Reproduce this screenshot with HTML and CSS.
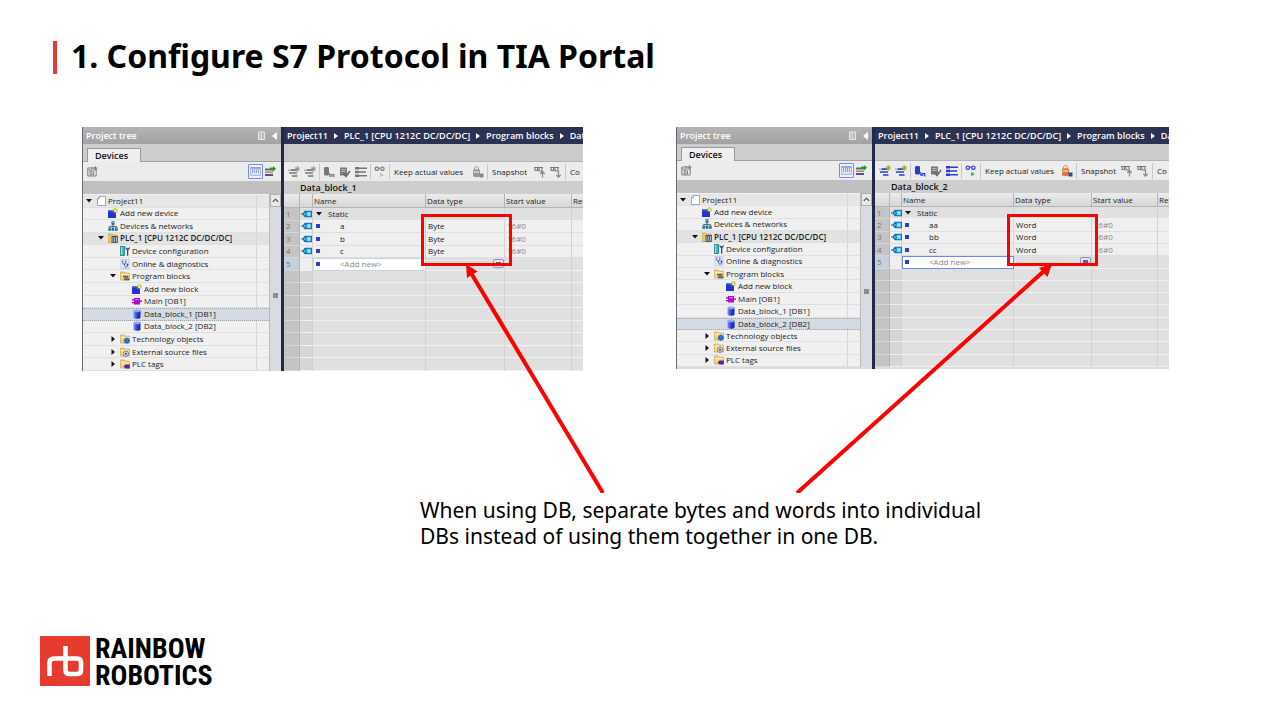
FILE: index.html
```html
<!DOCTYPE html>
<html lang="en">
<head>
<meta charset="utf-8">
<title>Configure S7 Protocol in TIA Portal</title>
<link rel="stylesheet" href="styles.css">
</head>
<body>
<svg class="defs" aria-hidden="true">
  <linearGradient id="g-cyl"><stop offset="0" stop-color="#7f95ff"/><stop offset=".5" stop-color="#2b3fe0"/><stop offset="1" stop-color="#1420a0"/></linearGradient>
  <symbol id="i-open" viewBox="0 0 6 6"><path d="M0 1h6L3 4.500z"/></symbol>
  <symbol id="i-closed" viewBox="0 0 6 6"><path d="M1.500 0v6L5 3z"/></symbol>
  <symbol id="i-page" viewBox="0 0 10 10"><path d="M3.500.5h6v9h-8v-7z" fill="#fff" stroke="#7d8fd0" stroke-width=".8"/><path d="M1.500 2.700h2.200V.6" fill="#cdd6f6" stroke="#7d8fd0" stroke-width=".6"/></symbol>
  <symbol id="i-new" viewBox="0 0 10 10"><path d="M0 2h8v8H0z" fill="#2334d0"/><path d="M0 2h8v1.500H0z" fill="#5a6cf0"/><path d="M7.200 0v5.400M4.500 2.700h5.400M5.400.8l3.700 3.800M9.100.8L5.400 4.600" stroke="#a9b900" stroke-width="1"/><circle cx="7.200" cy="2.700" r="1.200" fill="#fffb7a"/></symbol>
  <symbol id="i-net" viewBox="0 0 10 10"><path d="M5 2.500V6M1.700 7.500V5.400h6.600v2.100" fill="none" stroke="#345" stroke-width=".8"/><path d="M3.500.3h3v3.400h-3zM.3 6.400h2.800v3.300H.3zM3.700 6.400h2.600v3.300H3.700zM7 6.400h2.700v3.300H7z" fill="#1c6c9c"/><path d="M4.200 1h1.600v1H4.200zM.9 7h1.500v.8H.9zM7.600 7h1.500v.8H7.600z" fill="#7fd0e8"/></symbol>
  <symbol id="i-plc" viewBox="0 0 10 10"><path d="M0 1h4l1 1h4v7.500H0z" fill="#f2c75a" stroke="#a8873a" stroke-width=".5"/><path d="M3.600 3h6.200v6.800H3.600z" fill="#3c4658"/><path d="M4.400 4h1v5h-1zM6.200 4h1v5h-1zM8 4h1v5H8z" fill="#a9c2d4"/></symbol>
  <symbol id="i-dev" viewBox="0 0 10 10"><path d="M.4.4h4.200v9.200H.4z" fill="#34b6d8" stroke="#165" stroke-width=".7"/><path d="M1.600 1v8" stroke="#b7f0ff" stroke-width=".8"/><path d="M5.700.6v2.500l1.300 1v5.600h1.300V4.100l1.300-1V.6L8.500 2.300H6.800z" fill="#244a9c"/></symbol>
  <symbol id="i-diag" viewBox="0 0 10 10"><path d="M1 .4h8v9.200H1z" fill="#e6ebff" stroke="#9fabdf" stroke-width=".6"/><path d="M3 1.500c-1 3 .2 3.500 1.300 3.500S6.500 4 5.700 1.500M4.300 5c0 4 3.200 4 3.200 1.200" fill="none" stroke="#3447a0" stroke-width="1"/><circle cx="7.500" cy="5.600" r="1" fill="#3447a0"/></symbol>
  <symbol id="i-folder" viewBox="0 0 10 10"><path d="M.4 1h3.800l1 1.200h4.200V9H.4z" fill="#f6d77c" stroke="#b8953f" stroke-width=".6"/><path d="M.8 3.600h8.400" stroke="#fff0b8" stroke-width=".9"/></symbol>
  <symbol id="i-fblocks" viewBox="0 0 10 10"><use href="#i-folder"/><path d="M3.500 5.200h4.500v1H3.500zM4.500 7.800h4.500v1H4.500z" fill="#b9bcc2" stroke="#3a3d44" stroke-width=".8"/></symbol>
  <symbol id="i-ftech" viewBox="0 0 10 10"><use href="#i-folder"/><circle cx="6.800" cy="6.700" r="1.900" fill="#fff" stroke="#1f64c8" stroke-width="1.500"/><path d="M6.800 3.300v7M3.400 6.700h6.600M4.500 4.300l4.800 4.900M9.200 4.300L4.400 9.200" stroke="#1f64c8" stroke-width=".8"/></symbol>
  <symbol id="i-fext" viewBox="0 0 10 10"><use href="#i-folder"/><circle cx="6" cy="6.700" r="2.700" fill="#d5d5dc" stroke="#666c7c" stroke-width=".8"/><circle cx="6" cy="6.700" r="1" fill="#445"/></symbol>
  <symbol id="i-ftags" viewBox="0 0 10 10"><use href="#i-folder"/><path d="M3.500 7.600l2-2h4.300v4H5.500z" fill="#5d1fa8"/></symbol>
  <symbol id="i-ob" viewBox="0 0 10 10"><path d="M2 2h6v6.500H2z" fill="#b400d8"/><path d="M0 3.800h2M0 6.600h2M8 5.200h2" stroke="#8300a0" stroke-width="1.300"/><path d="M3 3h4v1.200H3z" fill="#e46cff"/></symbol>
  <symbol id="i-db" viewBox="0 0 10 10"><path d="M1.500 1.800v6.600c0 1.800 7 1.800 7 0V1.800z" fill="url(#g-cyl)"/><ellipse cx="5" cy="1.900" rx="3.500" ry="1.300" fill="#8ea2ff"/></symbol>
  <symbol id="i-tag" viewBox="0 0 11 8"><path d="M0 3.400h1.500L3.800.8H11v6.400H3.800L1.500 4.600H0z" fill="#0c74ba"/><path d="M5.500 1.800H10v4.400H5.500z" fill="#45c0f0"/><path d="M6.500 3.200h2.700M6.500 4.900h2.700" stroke="#fff" stroke-width=".8"/><circle cx="3.800" cy="4" r=".8" fill="#bfe8fb"/></symbol>
  <symbol id="i-newview" viewBox="0 0 11 11"><path d="M.8 2h8.400v8H.8zM.8 4h8.400M3 5.500h2v3.500H3zM6.500 5.500v4M5 1v2" fill="none" stroke="#777" stroke-width=".9"/><path d="M8.500 0v4M6.500 2h4" stroke="#777" stroke-width=".8"/></symbol>
  <symbol id="i-cols" viewBox="0 0 11 11"><path d="M.5 1.500h10v8H.5z" fill="#dfe3f4" stroke="#a3abd0" stroke-width=".8"/><path d="M.5 2h10" stroke="#8791bd" stroke-width="1.200"/><path d="M2.500 3v4M4.500 3v4M6.500 3v4M8.500 3v4" stroke="#8791bd" stroke-width=".8"/></symbol>
  <symbol id="i-export" viewBox="0 0 11 11"><path d="M0 2.500h8v2H0z" fill="#3b7898"/><path d="M0 5.500h8v1.500H0z" fill="#d97a2b"/><path d="M0 8h8v2H0z" fill="#4a4f9e"/><path d="M5 1.500h3V0l3 2.800-3 2.700V4H5z" fill="#199a35"/></symbol>
  <symbol id="i-row" viewBox="0 0 12 12"><path d="M2.500 4.200h6M1 7h8M4 10h5.500" stroke="currentColor" stroke-width="1.700"/><path d="M0 4.200h2M9.300 0v6M6.500 3h5.500M7.400 1.100l3.800 3.800M11.200 1.100L7.400 4.900" stroke="var(--spark)" stroke-width=".9"/></symbol>
  <symbol id="i-dbs" viewBox="0 0 12 12"><path d="M1 2c0-1.300 5-1.300 5 0v6.500c0 1.300-5 1.300-5 0z" fill="currentColor"/><path d="M6.800 7v3.200h2V8.500h2v3" fill="none" stroke="currentColor" stroke-width="1.200"/></symbol>
  <symbol id="i-dbcheck" viewBox="0 0 12 12"><path d="M1 1.500h7v8H1z" fill="#777"/><path d="M2.200 3.500h4.500M2.200 5.500h4.500" stroke="#ccc" stroke-width=".8"/><path d="M5 8l2 2.500L11 5" fill="none" stroke="#666" stroke-width="1.600"/></symbol>
  <symbol id="i-list" viewBox="0 0 12 12"><path d="M0 2.300h4M0 6h4M0 9.700h4" stroke="currentColor" stroke-width="2.400"/><path d="M4 2.300h8M4 6h7M4 9.700h8" stroke="currentColor" stroke-width="1.400" fill="none"/></symbol>
  <symbol id="i-glasses" viewBox="0 0 12 12"><path d="M4.300 2.200h2.400" stroke="currentColor"/><circle cx="2.800" cy="2.700" r="1.700" fill="none" stroke="currentColor" stroke-width="1.200"/><circle cx="8.400" cy="2.700" r="1.700" fill="none" stroke="currentColor" stroke-width="1.200"/><path d="M6 7l4 2-4 2z" fill="var(--go)"/></symbol>
  <symbol id="i-lock" viewBox="0 0 12 12"><path d="M2.500 4V2.200c0-2 4-2 4 0V4" fill="none" stroke="var(--cyl)" stroke-width="1"/><path d="M1 4c0-1 7-1 7 0v6c0 1.500-7 1.500-7 0z" fill="var(--cyl)"/><path d="M1.500 6h5.500" stroke="#eee"/><path d="M7.500 7.500h4v4h-4z" fill="var(--pad)"/></symbol>
  <symbol id="i-snapup" viewBox="0 0 12 12"><path d="M0 1.500h9M1 1v4M1 4.500h2.500V2M5 2v3h3V2" fill="none" stroke="#777" stroke-width="1.100"/><path d="M8.500 11.500V6M6.300 8l2.200-2.500L10.700 8" fill="none" stroke="#888" stroke-width="1.200"/></symbol>
  <symbol id="i-snapdn" viewBox="0 0 12 12"><path d="M0 1.500h9M1 1v4M1 4.500h2.500V2M5 2v3h3V2" fill="none" stroke="#777" stroke-width="1.100"/><path d="M8.500 5v6M6.300 8.800l2.200 2.400 2.200-2.400" fill="none" stroke="#888" stroke-width="1.200"/></symbol>
</svg>

<main class="slide">
  <h1 class="title">1. Configure S7 Protocol in TIA Portal</h1>

  <section class="stage">
    <figure class="shot shot-a">
      <div class="tree-pane">
        <div class="pane-head">Project tree<svg class="head-icons" viewBox="0 0 20 10"><path d="M.5 1h6v7.500h-6zM3 1v7.500" fill="#bbb" stroke="#e6e6e6"/><path d="M19 1v8l-5-4z" fill="#fff"/></svg></div>
        <div class="tabs"><button class="tab">Devices</button></div>
        <div class="tools tree-tools"><button class="tool"><svg><use href="#i-newview"/></svg></button><button class="tool picked"><svg><use href="#i-cols"/></svg></button><button class="tool"><svg><use href="#i-export"/></svg></button></div>
        <div class="band"></div>
        <div class="tree-body">
          <ul class="tree">
            <li class="d0 lit"><svg class="tw"><use href="#i-open"/></svg><svg class="ic"><use href="#i-page"/></svg>Project11</li>
            <li class="d1"><svg class="tw"></svg><svg class="ic"><use href="#i-new"/></svg>Add new device</li>
            <li class="d1"><svg class="tw"></svg><svg class="ic"><use href="#i-net"/></svg>Devices &amp; networks</li>
            <li class="d1 strong"><svg class="tw"><use href="#i-open"/></svg><svg class="ic"><use href="#i-plc"/></svg>PLC_1 [CPU 1212C DC/DC/DC]</li>
            <li class="d2"><svg class="tw"></svg><svg class="ic"><use href="#i-dev"/></svg>Device configuration</li>
            <li class="d2"><svg class="tw"></svg><svg class="ic"><use href="#i-diag"/></svg>Online &amp; diagnostics</li>
            <li class="d2"><svg class="tw"><use href="#i-open"/></svg><svg class="ic"><use href="#i-fblocks"/></svg>Program blocks</li>
            <li class="d3"><svg class="tw"></svg><svg class="ic"><use href="#i-new"/></svg>Add new block</li>
            <li class="d3"><svg class="tw"></svg><svg class="ic"><use href="#i-ob"/></svg>Main [OB1]</li>
            <li class="d3 chosen"><svg class="tw"></svg><svg class="ic"><use href="#i-db"/></svg>Data_block_1 [DB1]</li>
            <li class="d3"><svg class="tw"></svg><svg class="ic"><use href="#i-db"/></svg>Data_block_2 [DB2]</li>
            <li class="d2"><svg class="tw"><use href="#i-closed"/></svg><svg class="ic"><use href="#i-ftech"/></svg>Technology objects</li>
            <li class="d2"><svg class="tw"><use href="#i-closed"/></svg><svg class="ic"><use href="#i-fext"/></svg>External source files</li>
            <li class="d2"><svg class="tw"><use href="#i-closed"/></svg><svg class="ic"><use href="#i-ftags"/></svg>PLC tags</li>
          </ul>
          <div class="scroll"><svg class="up" viewBox="0 0 10 10"><path d="M2 6.500L5 3.500l3 3" fill="none" stroke="#444" stroke-width="1.200"/></svg><span class="grip"></span></div>
        </div>
      </div>
      <div class="editor">
        <nav class="crumbs"><span>Project11</span><span>PLC_1 [CPU 1212C DC/DC/DC]</span><span>Program blocks</span><span>Data</span></nav>
        <div class="strip"></div>
        <div class="tools edit-tools idle">
          <button class="tool"><svg><use href="#i-row"/></svg></button><button class="tool"><svg><use href="#i-row"/></svg></button><i class="sep"></i>
          <button class="tool"><svg><use href="#i-dbs"/></svg></button><button class="tool"><svg><use href="#i-dbcheck"/></svg></button><button class="tool"><svg><use href="#i-list"/></svg></button><i class="sep"></i>
          <button class="tool"><svg><use href="#i-glasses"/></svg></button><i class="sep"></i>
          <button class="word keep">Keep actual values</button><button class="tool"><svg><use href="#i-lock"/></svg></button><i class="sep"></i>
          <button class="word snap">Snapshot</button><button class="tool"><svg><use href="#i-snapup"/></svg></button><button class="tool"><svg><use href="#i-snapdn"/></svg></button><i class="sep"></i>
          <button class="word">Co</button>
        </div>
        <h2 class="block-name">Data_block_1</h2>
        <table class="grid">
          <thead><tr><th></th><th></th><th>Name</th><th>Data type</th><th>Start value</th><th>Ret</th></tr></thead>
          <tbody>
            <tr class="static"><td>1</td><td><svg class="tag"><use href="#i-tag"/></svg></td><td><svg class="tw"><use href="#i-open"/></svg>Static</td><td></td><td></td><td></td></tr>
            <tr class="item"><td>2</td><td><svg class="tag"><use href="#i-tag"/></svg></td><td><i class="dot"></i>a</td><td>Byte</td><td>16#0</td><td></td></tr>
            <tr class="item"><td>3</td><td><svg class="tag"><use href="#i-tag"/></svg></td><td><i class="dot"></i>b</td><td>Byte</td><td>16#0</td><td></td></tr>
            <tr class="item"><td>4</td><td><svg class="tag"><use href="#i-tag"/></svg></td><td><i class="dot"></i>c</td><td>Byte</td><td>16#0</td><td></td></tr>
            <tr class="add"><td>5</td><td></td><td><i class="dot"></i>&lt;Add new&gt;</td><td><button class="pick" aria-label="Choose type"></button></td><td></td><td></td></tr>
            <tr><td></td><td></td><td></td><td></td><td></td><td></td></tr>
            <tr><td></td><td></td><td></td><td></td><td></td><td></td></tr>
            <tr><td></td><td></td><td></td><td></td><td></td><td></td></tr>
            <tr><td></td><td></td><td></td><td></td><td></td><td></td></tr>
            <tr><td></td><td></td><td></td><td></td><td></td><td></td></tr>
            <tr><td></td><td></td><td></td><td></td><td></td><td></td></tr>
            <tr><td></td><td></td><td></td><td></td><td></td><td></td></tr>
            <tr><td></td><td></td><td></td><td></td><td></td><td></td></tr>
          </tbody>
        </table>
      </div>
      <span class="mark"></span>
    </figure>

    <figure class="shot shot-b">
      <div class="tree-pane">
        <div class="pane-head">Project tree<svg class="head-icons" viewBox="0 0 20 10"><path d="M.5 1h6v7.500h-6zM3 1v7.500" fill="#bbb" stroke="#e6e6e6"/><path d="M19 1v8l-5-4z" fill="#fff"/></svg></div>
        <div class="tabs"><button class="tab">Devices</button></div>
        <div class="tools tree-tools"><button class="tool"><svg><use href="#i-newview"/></svg></button><button class="tool picked"><svg><use href="#i-cols"/></svg></button><button class="tool"><svg><use href="#i-export"/></svg></button></div>
        <div class="band"></div>
        <div class="tree-body">
          <ul class="tree">
            <li class="d0 lit"><svg class="tw"><use href="#i-open"/></svg><svg class="ic"><use href="#i-page"/></svg>Project11</li>
            <li class="d1"><svg class="tw"></svg><svg class="ic"><use href="#i-new"/></svg>Add new device</li>
            <li class="d1"><svg class="tw"></svg><svg class="ic"><use href="#i-net"/></svg>Devices &amp; networks</li>
            <li class="d1 strong"><svg class="tw"><use href="#i-open"/></svg><svg class="ic"><use href="#i-plc"/></svg>PLC_1 [CPU 1212C DC/DC/DC]</li>
            <li class="d2"><svg class="tw"></svg><svg class="ic"><use href="#i-dev"/></svg>Device configuration</li>
            <li class="d2"><svg class="tw"></svg><svg class="ic"><use href="#i-diag"/></svg>Online &amp; diagnostics</li>
            <li class="d2"><svg class="tw"><use href="#i-open"/></svg><svg class="ic"><use href="#i-fblocks"/></svg>Program blocks</li>
            <li class="d3"><svg class="tw"></svg><svg class="ic"><use href="#i-new"/></svg>Add new block</li>
            <li class="d3"><svg class="tw"></svg><svg class="ic"><use href="#i-ob"/></svg>Main [OB1]</li>
            <li class="d3"><svg class="tw"></svg><svg class="ic"><use href="#i-db"/></svg>Data_block_1 [DB1]</li>
            <li class="d3 chosen"><svg class="tw"></svg><svg class="ic"><use href="#i-db"/></svg>Data_block_2 [DB2]</li>
            <li class="d2"><svg class="tw"><use href="#i-closed"/></svg><svg class="ic"><use href="#i-ftech"/></svg>Technology objects</li>
            <li class="d2"><svg class="tw"><use href="#i-closed"/></svg><svg class="ic"><use href="#i-fext"/></svg>External source files</li>
            <li class="d2"><svg class="tw"><use href="#i-closed"/></svg><svg class="ic"><use href="#i-ftags"/></svg>PLC tags</li>
          </ul>
          <div class="scroll"><svg class="up" viewBox="0 0 10 10"><path d="M2 6.500L5 3.500l3 3" fill="none" stroke="#444" stroke-width="1.200"/></svg><span class="grip"></span></div>
        </div>
      </div>
      <div class="editor">
        <nav class="crumbs"><span>Project11</span><span>PLC_1 [CPU 1212C DC/DC/DC]</span><span>Program blocks</span><span>Data</span></nav>
        <div class="strip"></div>
        <div class="tools edit-tools live">
          <button class="tool"><svg><use href="#i-row"/></svg></button><button class="tool"><svg><use href="#i-row"/></svg></button><i class="sep"></i>
          <button class="tool"><svg><use href="#i-dbs"/></svg></button><button class="tool"><svg><use href="#i-dbcheck"/></svg></button><button class="tool"><svg><use href="#i-list"/></svg></button><i class="sep"></i>
          <button class="tool"><svg><use href="#i-glasses"/></svg></button><i class="sep"></i>
          <button class="word keep">Keep actual values</button><button class="tool"><svg><use href="#i-lock"/></svg></button><i class="sep"></i>
          <button class="word snap">Snapshot</button><button class="tool"><svg><use href="#i-snapup"/></svg></button><button class="tool"><svg><use href="#i-snapdn"/></svg></button><i class="sep"></i>
          <button class="word">Co</button>
        </div>
        <h2 class="block-name">Data_block_2</h2>
        <table class="grid">
          <thead><tr><th></th><th></th><th>Name</th><th>Data type</th><th>Start value</th><th>Ret</th></tr></thead>
          <tbody>
            <tr class="static"><td>1</td><td><svg class="tag"><use href="#i-tag"/></svg></td><td><svg class="tw"><use href="#i-open"/></svg>Static</td><td></td><td></td><td></td></tr>
            <tr class="item"><td>2</td><td><svg class="tag"><use href="#i-tag"/></svg></td><td><i class="dot"></i>aa</td><td>Word</td><td>16#0</td><td></td></tr>
            <tr class="item"><td>3</td><td><svg class="tag"><use href="#i-tag"/></svg></td><td><i class="dot"></i>bb</td><td>Word</td><td>16#0</td><td></td></tr>
            <tr class="item"><td>4</td><td><svg class="tag"><use href="#i-tag"/></svg></td><td><i class="dot"></i>cc</td><td>Word</td><td>16#0</td><td></td></tr>
            <tr class="add focus"><td>5</td><td></td><td><i class="dot"></i>&lt;Add new&gt;</td><td><button class="pick" aria-label="Choose type"></button></td><td></td><td></td></tr>
            <tr><td></td><td></td><td></td><td></td><td></td><td></td></tr>
            <tr><td></td><td></td><td></td><td></td><td></td><td></td></tr>
            <tr><td></td><td></td><td></td><td></td><td></td><td></td></tr>
            <tr><td></td><td></td><td></td><td></td><td></td><td></td></tr>
            <tr><td></td><td></td><td></td><td></td><td></td><td></td></tr>
            <tr><td></td><td></td><td></td><td></td><td></td><td></td></tr>
            <tr><td></td><td></td><td></td><td></td><td></td><td></td></tr>
            <tr><td></td><td></td><td></td><td></td><td></td><td></td></tr>
          </tbody>
        </table>
      </div>
      <span class="mark"></span>
    </figure>

    <svg class="arrows" viewBox="0 0 1280 366" preserveAspectRatio="none" aria-hidden="true">
      <path d="M603 366L471 146M797 366L1044 144" stroke="#f00" stroke-width="4"/>
      <path d="M466 137l11.500 7.500-10.500 6.500zM1052 137l-4.500 13-8.500-9z" fill="#f00"/>
    </svg>
  </section>

  <p class="note">When using DB, separate bytes and words into individual DBs instead of using them together in one DB.</p>

  <footer class="brand">
    <svg class="logo" viewBox="0 0 50 50" aria-hidden="true"><path d="M0 0h50v50H0z" fill="#e63c30"/><path d="M9.500 40V27q0-4.500 4.500-4.500h23q4 0 4 4V34q0 4-4 4h-7.500q-4 0-4-4V10" fill="none" stroke="#fff" stroke-width="4.600"/></svg>
    <div class="brand-name">RAINBOW<br>ROBOTICS</div>
  </footer>
</main>
</body>
</html>
```
FILE: styles.css
```css
* { box-sizing: border-box; }
body { margin: 0; background: #fff; color: #000; font-family: "Noto Sans", "Open Sans", sans-serif; }
button { font: inherit; color: inherit; border: 0; padding: 0; background: none; white-space: nowrap; }
.defs { position: absolute; width: 0; height: 0; }

.slide { display: flex; flex-direction: column; min-height: 100vh; padding-bottom: 31px; overflow: hidden; }
.title { margin: 41px 0 0 53px; padding-left: 14px; border-left: 4px solid #e63c30; font-size: 32px; line-height: 29px; padding-bottom: 4px; font-weight: 700; white-space: nowrap; }

.stage { position: relative; display: grid; grid-template-columns: 501fr 493fr; gap: 93px; align-items: start; margin-top: 53px; padding: 0 111px 0 82px; }
.arrows { position: absolute; left: 0; top: 0; width: 100%; height: 366px; pointer-events: none; }
.note { width: 600px; margin: 126px 0 0 420px; font-size: 21px; line-height: 26px; }
.brand { display: flex; gap: 5px; margin: auto 0 0 40px; }
.logo { width: 50px; height: 50px; margin-top: 1px; }
.brand-name { font-family: "Liberation Sans Narrow", "Roboto Condensed", "DejaVu Sans Condensed", sans-serif; font-size: 28px; font-weight: 700; line-height: 27px; }

.shot { position: relative; display: grid; grid-template-columns: 199fr 302fr; margin: 0; height: 244px; overflow: hidden; font-family: "Open Sans", "Noto Sans", sans-serif; font-size: 8px; line-height: 10px; color: #222; background: #dcdcdc; }
.shot-b { grid-template-columns: 196fr 297fr; height: 242px; }
.tree-pane, .editor { display: grid; grid-template-rows: 17px 18px 19px 13px 1fr; min-width: 0; min-height: 0; }
.shot-b .tree-pane, .shot-b .editor { grid-template-rows: 17px 17px 19px 13px 1fr; }
.shot-b .tree-body, .shot-b .grid { margin-bottom: 2px; }
.tree-pane { border-left: 1px solid #666a78; }
.editor { border-left: 3px solid #22284a; overflow: hidden; }

.pane-head { display: flex; align-items: center; justify-content: space-between; padding: 0 3px; background: linear-gradient(#b4b4b4, #a2a2a2); color: #fff; font-size: 9px; font-weight: 600; }
.head-icons { width: 20px; height: 10px; }
.tabs { display: flex; align-items: flex-end; padding-left: 4px; background: #cdcdcd; border-bottom: 1px solid #a0a0a0; }
.tab { height: 14px; padding: 0 12px 0 7px; margin-bottom: -1px; background: #efefef; border: 1px solid #999; border-bottom: 0; color: #111; font-size: 9px; font-weight: 600; }
.tools { display: flex; align-items: center; background: #ececec; overflow: hidden; }
.tool { flex: none; display: flex; align-items: center; justify-content: center; width: 15px; height: 15px; }
.tool svg { width: 11px; height: 11px; }
.tree-tools { padding: 0 3px 0 2px; }
.tree-tools .tool:first-child { margin-right: auto; }
.tree-tools .picked { border: 1px solid #6f8fd8; border-radius: 1px; background: #eef2ff; }
.band { background: #c0c0c0; }

.tree-body { display: grid; grid-template-columns: 1fr 12px; min-height: 0; background: #f0f0f0; }
.tree { display: grid; grid-template-rows: repeat(14, 1fr); margin: 0; padding: 1px 0 0; list-style: none; min-height: 0; }
.tree li { display: flex; align-items: center; min-height: 0; border-bottom: 1px solid #e0e0e0; white-space: nowrap; }
.tree li::after { content: ""; align-self: stretch; width: 12px; margin-left: auto; border-left: 1px solid #d6d6d6; }
.tree .d0 { padding-left: 3px; }
.tree .d1 { padding-left: 15px; }
.tree .d2 { padding-left: 27px; }
.tree .d3 { padding-left: 39px; }
.tree .lit { background: #e6e6e6; }
.tree .strong { background: #e2e2e2; font-weight: 600; }
.tree .chosen { background: #d4dbe2; border: 1px dotted #9aa2aa; border-left: 0; border-right: 0; }
.tw { flex: none; width: 6px; height: 6px; margin-right: 4px; fill: #111; }
.ic { flex: none; width: 10px; height: 10px; margin-right: 2px; }
.scroll { display: flex; flex-direction: column; align-items: center; justify-content: space-between; background: #dadbe0; border-left: 1px solid #bbb; }
.up { width: 11px; height: 13px; background: #e8e8e8; border: 1px solid #b0b0b0; }
.grip { width: 5px; height: 5px; margin-bottom: 73px; background: #8e8e8e; }

.crumbs { display: flex; align-items: center; padding-left: 3px; background: #2b3252; color: #fff; font-size: 9px; font-weight: 600; white-space: nowrap; }
.crumbs span + span::before { content: ""; display: inline-block; margin: 0 6px; border: 3px solid transparent; border-left: 4px solid #fff; border-right: 0; }
.strip { background: #cbcbcb; border-bottom: 1px solid #b4b4b4; }
.edit-tools { padding-left: 2px; color: #777; --spark: #888; --go: #bbb; --cyl: #999; --pad: #888; }
.edit-tools.live { color: #2b3cd0; --spark: #9a9c10; --go: #2db35a; --cyl: #e07a3a; --pad: #234fa8; }
.edit-tools .tool { width: 16px; }
.edit-tools .tool svg { width: 12px; height: 12px; }
.sep { flex: none; width: 1px; height: 16px; margin: 0 1px; background: #c8c8c8; }
.word { flex: none; color: #222; padding: 0 3px; text-align: left; }
.keep { width: 79px; }
.snap { width: 43px; }
.shot-b .keep { width: 77px; }
.shot-b .snap { width: 41px; }
.block-name { margin: 0; padding-left: 16px; background: #cecece; color: #111; font-size: 9px; line-height: 13px; font-weight: 600; }

.grid { display: grid; grid-template-rows: 14px repeat(13, 1fr); min-height: 0; min-width: 0; }
.grid thead, .grid tbody { display: contents; }
.grid tr { display: grid; grid-template-columns: 16px 13px 113px 79px 67px 1fr; min-height: 0; overflow: hidden; }
.shot-b .grid tr { grid-template-columns: 15px 12px 112px 78px 66px 1fr; }
.grid th, .grid td { display: flex; align-items: center; min-width: 0; padding: 0 0 0 2px; border-right: 1px solid #d2d2d2; border-bottom: 1px solid #f1f1f1; background: #e0e0e0; text-align: left; font-weight: 400; white-space: nowrap; }
.grid th { padding-left: 1px; background: linear-gradient(#ececec, #d6d6d6); border-color: #b5b5b5; }
.grid td:first-child { background: #c4c4c4; color: #777; border-color: #b4b4b4; border-bottom-color: #d6d6d6; }
.grid td:nth-child(2) { background: #d6d6d6; }
.grid .item td:nth-child(n+2) { background: #efefef; border-bottom-color: #dedede; }
.grid .static td:nth-child(n+2) { background: #e0e0e0; }
.grid td .tw { margin: 0 6px 0 1px; }
.tag { flex: none; width: 11px; height: 8px; }
.grid td:nth-child(2) { padding-left: 1px; }
.dot { width: 4px; height: 4px; margin: 0 20px 0 1px; background: #2742c8; }
.grid td:nth-child(5) { color: #888; }
.grid .add td:first-child { background: #c5d0dc; }
.grid .add td:nth-child(2) { background: #efefef; }
.grid .add td:nth-child(3) { padding-left: 1px; background: #fff; color: #888; border: 1px solid #c9d6e6; }
.grid .add.focus td:nth-child(3) { border-color: #6d8ce0; }
.pick { width: 11px; height: 9px; margin-left: auto; background: linear-gradient(#5062a8, #5062a8) center / 5px 4px no-repeat #e0e5f2; border: 1px solid #8a94b8; border-radius: 2px; }

.mark { position: absolute; left: 339px; top: 87px; width: 91px; height: 52px; border: 3px solid #f00; }
.shot-b .mark { left: 331px; }
```
